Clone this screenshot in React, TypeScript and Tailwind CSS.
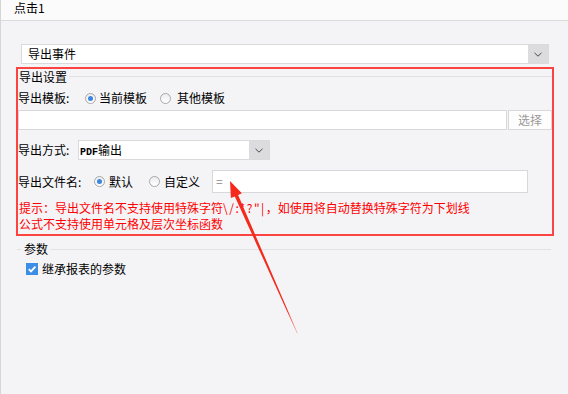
import React from 'react';

function Chevron() {
  return (
    <svg width="8" height="5" viewBox="0 0 8 5">
      <path d="M0.5 0.8 L4 4.2 L7.5 0.8" stroke="#4a4a4a" strokeWidth="1" fill="none" />
    </svg>
  );
}

function Radio({ checked, label, gap }: { checked?: boolean; label: string; gap: string }) {
  return (
    <div className={`flex items-center ${gap}`}>
      <span className="w-[11px] h-[11px] rounded-full border border-[#a8a8a8] bg-linear-to-b from-[#ececec] to-white flex items-center justify-center">
        {checked && <span className="w-[5px] h-[5px] rounded-full bg-[#3b86e2]" />}
      </span>
      <span>{label}</span>
    </div>
  );
}

export default function App() {
  return (
    <div className="w-[568px] h-[394px] relative overflow-hidden bg-[#f4f4f7] border-l border-[#d6d6d9] text-[12px] text-black font-['Noto_Sans_CJK_SC','Noto_Sans',sans-serif]">
      {/* title bar */}
      <div className="h-[21px] bg-[#fbfbfb] border-b border-[#dadadf] pl-[13px] leading-[16px]">点击1</div>

      <div className="pl-[15px]">
        {/* event select */}
        <div className="ml-[5px] mt-[23px] w-[528px] h-[20px] flex bg-white border border-[#dadadc]">
          <div className="flex-1 pl-[6px] leading-[18px]">导出事件</div>
          <div className="w-[20px] h-full bg-[#dcdcde] flex items-center justify-center">
            <Chevron />
          </div>
        </div>

        {/* export settings (annotated) */}
        <div className="mt-[3px] w-[538px] border-2 border-[#fd4242] pb-[2px]">
          <div className="h-[15px] flex items-center">
            <span className="pl-[1px]">导出设置</span>
            <span className="flex-1 h-px bg-[#e2e2e5] ml-[2px]" />
          </div>

          <div className="mt-[4px] h-[20px] flex items-center">
            <span className="w-[67px]">导出模板:</span>
            <Radio checked label="当前模板" gap="gap-[3px]" />
            <div className="ml-[13px]">
              <Radio label="其他模板" gap="gap-[6px]" />
            </div>
          </div>

          <div className="mt-[2px] flex">
            <div className="w-[489px] h-[20px] bg-white border border-[#d8d8da]" />
            <div className="ml-[1px] w-[44px] h-[20px] bg-[#fdfdfd] border border-[#d8d8da] text-[#9a9a9a] flex items-center justify-center">选择</div>
          </div>

          <div className="mt-[10px] h-[20px] flex items-center">
            <span className="w-[60px]">导出方式:</span>
            <div className="w-[192px] h-[20px] flex bg-white border border-[#dadadc]">
              <div className="flex-1 pl-[1px] leading-[18px]">
                <span className="font-['Liberation_Mono',monospace] font-bold text-[10px]">PDF</span>输出
              </div>
              <div className="w-[20px] h-full bg-[#dcdcde] flex items-center justify-center">
                <Chevron />
              </div>
            </div>
          </div>

          <div className="mt-[10px] h-[23px] flex items-center">
            <span className="w-[76px]">导出文件名:</span>
            <Radio checked label="默认" gap="gap-[4px]" />
            <div className="ml-[16px]">
              <Radio label="自定义" gap="gap-[4px]" />
            </div>
            <div className="ml-[12px] w-[316px] h-[23px] bg-white border border-[#d8d8da] pl-[3px] leading-[20px] text-[#8a8a8a]">=</div>
          </div>

          <div className="mt-[7px] pl-[1px] leading-[16px] text-[#ff0000]">
            <div>
              提示：导出文件名不支持使用特殊字符<span className="tracking-[1.5px]">\/:*?"|</span>，如使用将自动替换特殊字符为下划线
            </div>
            <div>公式不支持使用单元格及层次坐标函数</div>
          </div>
        </div>

        {/* params */}
        <div className="mt-[6px] w-[538px] h-[14px] flex items-center pl-[1px]">
          <span className="w-[4px] h-px bg-[#e2e2e5]" />
          <span className="ml-[3px]">参数</span>
          <span className="flex-1 h-px bg-[#e2e2e5] ml-[2px] mr-[3px]" />
        </div>
        <div className="mt-[6px] h-[14px] flex items-center pl-[10px]">
          <span className="w-[12px] h-[12px] bg-[#3b8de6] flex items-center justify-center">
            <svg width="10" height="10" viewBox="0 0 10 10">
              <path d="M1.8 5.2 L4 7.4 L8.4 2.6" stroke="white" strokeWidth="1.8" fill="none" />
            </svg>
          </span>
          <span className="ml-[4px]">继承报表的参数</span>
        </div>
      </div>

      {/* annotation arrow */}
      <svg className="absolute left-0 top-0 pointer-events-none" width="568" height="394" viewBox="0 0 568 394">
        <defs>
          <linearGradient id="tail" x1="229" y1="181" x2="296" y2="333" gradientUnits="userSpaceOnUse">
            <stop offset="0" stopColor="#f42a1c" />
            <stop offset="0.85" stopColor="#f42a1c" />
            <stop offset="1" stopColor="#f8a0a0" />
          </linearGradient>
        </defs>
        <polygon
          points="229,181 240.9,193.3 237.1,195 296.5,333 296,333.2 233.8,196.4 229.9,198.1"
          fill="url(#tail)"
        />
      </svg>
    </div>
  );
}
